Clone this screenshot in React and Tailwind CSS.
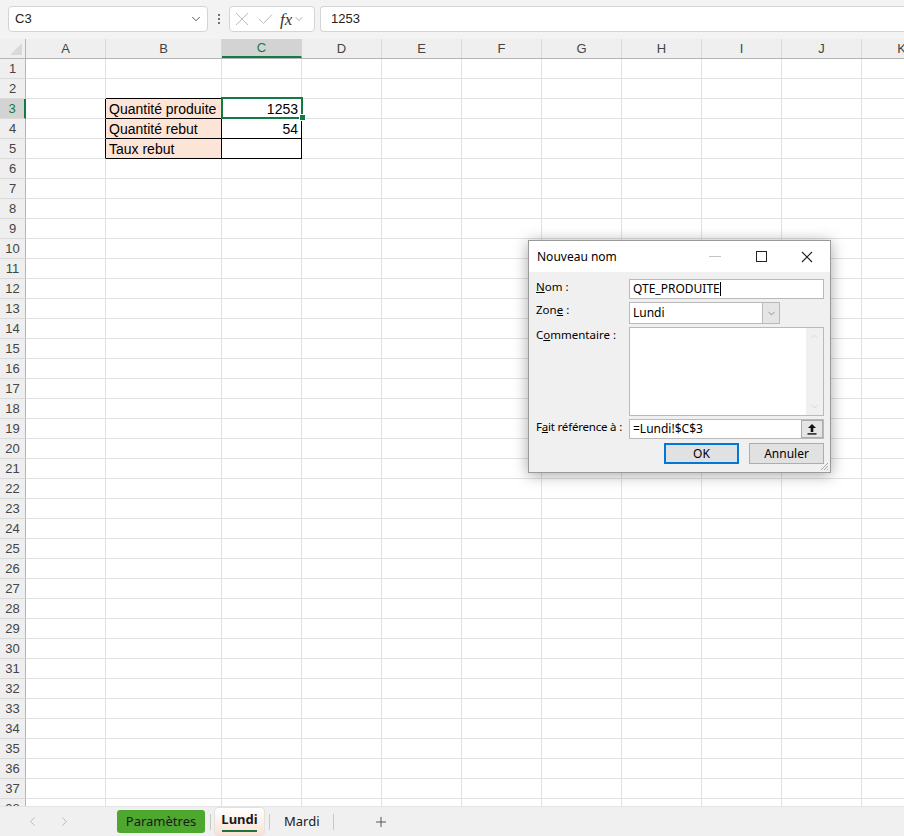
import { ChevronDown, ChevronLeft, ChevronRight, Plus, ChevronUp } from "lucide-react";

const COLS = [
  { id: "A", w: "w-[80px]" },
  { id: "B", w: "w-[116px]" },
  { id: "C", w: "w-[80px]" },
  { id: "D", w: "w-[80px]" },
  { id: "E", w: "w-[80px]" },
  { id: "F", w: "w-[80px]" },
  { id: "G", w: "w-[80px]" },
  { id: "H", w: "w-[80px]" },
  { id: "I", w: "w-[80px]" },
  { id: "J", w: "w-[80px]" },
  { id: "K", w: "w-[80px]" },
];

const ROWS = Array.from({ length: 38 }, (_, i) => i + 1);

const cells = {
  B3: "Quantité produite",
  B4: "Quantité rebut",
  B5: "Taux rebut",
  C3: "1253",
  C4: "54",
};

function Cell({ r, c, w }) {
  const inTable = r >= 3 && r <= 5 && (c === "B" || c === "C");
  const blackRight = r >= 3 && r <= 5 && (c === "A" || c === "B" || c === "C");
  const blackBottom = r >= 2 && r <= 5 && (c === "B" || c === "C");
  const value = cells[c + r];
  return (
    <div
      className={`${w} h-full shrink-0 border-r border-b flex items-center pt-[2px] overflow-hidden whitespace-nowrap text-[14px] text-black ${
        blackRight ? "border-r-black" : "border-r-[#e1e1e1]"
      } ${blackBottom ? "border-b-black" : "border-b-[#e1e1e1]"} ${
        inTable && c === "B" ? "bg-[#fce4d6]" : "bg-white"
      } ${c === "C" ? "justify-end pr-[3px]" : "pl-[3px]"}`}
    >
      {value}
    </div>
  );
}

function Toolbar() {
  return (
    <div className="h-[39px] shrink-0 bg-[#f3f3f3] flex items-start pt-[6px]">
      <div className="ml-[8px] w-[200px] h-[26px] bg-white border border-[#d4d4d4] rounded-[4px] flex items-center justify-between pl-[6px] pr-[4px]">
        <span className="text-[13px] text-[#222]">C3</span>
        <ChevronDown size={14} strokeWidth={1.5} className="text-[#444]" />
      </div>
      <div className="w-[21px] h-[26px] flex flex-col items-center justify-center gap-[2px]">
        <span className="w-[2px] h-[2px] bg-[#444] rounded-full" />
        <span className="w-[2px] h-[2px] bg-[#444] rounded-full" />
        <span className="w-[2px] h-[2px] bg-[#444] rounded-full" />
      </div>
      <div className="w-[86px] h-[26px] bg-white border border-[#d4d4d4] rounded-[4px] flex items-center pl-[5px]">
        <svg width="14" height="14" viewBox="0 0 14 14">
          <path d="M1 1 L13 13 M13 1 L1 13" stroke="#bcbcbc" strokeWidth="1" fill="none" />
        </svg>
        <svg width="15" height="12" viewBox="0 0 15 12" className="ml-[9px]">
          <path d="M1 6 L5.5 10.5 L14 1.5" stroke="#bcbcbc" strokeWidth="1" fill="none" />
        </svg>
        <span className="ml-[7px] text-[17px] italic text-[#333] leading-none" style={{ fontFamily: '"Liberation Serif", serif' }}>
          fx
        </span>
        <ChevronDown size={12} strokeWidth={1.2} className="text-[#777] ml-[1px]" />
      </div>
      <div className="ml-[5px] flex-1 h-[26px] bg-white border border-r-0 border-[#d4d4d4] rounded-l-[4px] flex items-center pl-[10px]">
        <span className="text-[13px] text-[#222]">1253</span>
      </div>
    </div>
  );
}

function ColumnHeader() {
  return (
    <div className="flex h-[20px] shrink-0 bg-[#efefef] border-b border-b-[#b5b5b5]">
      <div className="w-[26px] shrink-0 h-full border-r border-r-[#b5b5b5] relative">
        <svg width="25" height="19" className="absolute left-0 top-0">
          <polygon points="10,16 22,4 22,16" fill="#d9d9d9" />
        </svg>
      </div>
      {COLS.map((col) => (
        <div
          key={col.id}
          className={`${col.w} shrink-0 h-full flex items-center justify-center text-[13px] border-r ${
            col.id === "C"
              ? "bg-[#d3d3d3] text-[#107c41] border-r-[#d3d3d3] border-b-2 border-b-[#107c41]"
              : "text-[#444] border-r-[#dadada]"
          }`}
        >
          {col.id}
        </div>
      ))}
    </div>
  );
}

function Dialog() {
  return (
    <div className="absolute left-[528px] top-[240px] w-[303px] h-[233px] border border-[#9a9a9a] bg-[#f0f0f0] shadow-[0_2px_14px_rgba(0,0,0,0.35)] flex flex-col text-[12px] text-black" style={{ fontFamily: '"Noto Sans", sans-serif' }}>
      <div className="h-[31px] bg-white flex items-center shrink-0">
        <span className="ml-[8px] flex-1">Nouveau nom</span>
        <div className="w-[46px] flex justify-center">
          <span className="w-[12px] h-px bg-[#c4c4c4]" />
        </div>
        <div className="w-[46px] flex justify-center">
          <span className="w-[11px] h-[11px] border border-[#222]" />
        </div>
        <div className="w-[46px] flex justify-center">
          <svg width="12" height="12" viewBox="0 0 12 12">
            <path d="M1 1 L11 11 M11 1 L1 11" stroke="#222" strokeWidth="1.1" />
          </svg>
        </div>
      </div>
      <div className="flex-1 relative pt-[7px] pl-[7px] pr-[6px] grid grid-cols-[93px_1fr] gap-y-[3px] content-start">
        <span className="leading-[14px] pt-[1px] whitespace-nowrap text-[11.5px]">
          <span className="underline">N</span>om :
        </span>
        <div className="h-[20px] bg-white border border-[#b9b9b9] flex items-center pl-[3px]">
          QTE_PRODUITE<span className="w-px h-[14px] bg-black" />
        </div>

        <span className="leading-[14px] pt-[1px] whitespace-nowrap text-[11.5px]">
          Zon<span className="underline">e</span> :
        </span>
        <div className="w-[151px] h-[22px] bg-white border border-[#b9b9b9] flex items-center">
          <span className="flex-1 pl-[3px]">Lundi</span>
          <div className="w-[17px] h-full bg-[#e5e5e5] border-l border-[#b9b9b9] flex items-center justify-center">
            <ChevronDown size={11} strokeWidth={1.2} className="text-[#555]" />
          </div>
        </div>

        <span className="leading-[14px] pt-[1px] whitespace-nowrap text-[11.5px]">
          C<span className="underline">o</span>mmentaire :
        </span>
        <div className="h-[89px] bg-white border border-[#b9b9b9] flex justify-end">
          <div className="w-[17px] h-full bg-[#f0f0f0] flex flex-col justify-between items-center py-[3px]">
            <ChevronUp size={11} strokeWidth={1.2} className="text-[#c2c2c2]" />
            <ChevronDown size={11} strokeWidth={1.2} className="text-[#c2c2c2]" />
          </div>
        </div>

        <span className="leading-[14px] pt-[1px] whitespace-nowrap text-[11.5px] tracking-[-0.2px]">
          F<span className="underline">a</span>it référence à :
        </span>
        <div className="h-[20px] bg-white border border-[#b9b9b9] flex items-center pl-[3px]">
          <span className="flex-1">=Lundi!$C$3</span>
          <div className="w-[22px] h-[18px] bg-[#e5e5e5] border border-[#adadad] flex items-center justify-center">
            <svg width="10" height="12" viewBox="0 0 10 12">
              <path d="M5 1 L9 5 L6.3 5 L6.3 9 L3.7 9 L3.7 5 L1 5 Z" fill="#111" />
              <rect x="0.5" y="10.2" width="9" height="1.4" fill="#111" />
            </svg>
          </div>
        </div>

        <span />
        <div className="flex justify-end gap-[10px] pt-[1px]">
          <div className="w-[75px] h-[21px] bg-[#e1e1e1] border-2 border-[#0078d7] flex items-center justify-center">OK</div>
          <div className="w-[75px] h-[21px] bg-[#e1e1e1] border border-[#adadad] flex items-center justify-center">Annuler</div>
        </div>

        <svg width="10" height="10" viewBox="0 0 10 10" className="absolute right-[1px] bottom-[1px]">
          <path d="M9 2 L2 9 M9 5 L5 9 M9 8 L8 9" stroke="#a8a8a8" strokeWidth="1" />
        </svg>
      </div>
    </div>
  );
}

function TabBar() {
  return (
    <div className="h-[30px] shrink-0 bg-[#f0f0f0] border-t border-t-[#e4e4e4] flex items-center text-[13px]" style={{ fontFamily: '"Noto Sans", sans-serif' }}>
      <ChevronLeft size={15} strokeWidth={1} className="ml-[25px] text-[#9a9a9a]" />
      <ChevronRight size={15} strokeWidth={1} className="ml-[17px] text-[#9a9a9a]" />
      <div className="ml-[45px] w-[88px] h-[23px] rounded-[3px] bg-[#4ea72e] flex items-center justify-center text-[#1a1a1a]">
        Paramètres
      </div>
      <span className="ml-[5px] w-px h-[16px] bg-[#c8c8c8]" />
      <div className="ml-[3px] w-[51px] h-[29px] self-start rounded-[4px] border border-[#e2e2e2] bg-gradient-to-b from-white to-[#fbe2d3] flex flex-col items-center justify-center">
        <span className="font-bold text-[#1a1a1a] leading-[16px]">Lundi</span>
        <span className="w-[35px] h-[2px] bg-[#217346] mt-[3px]" />
      </div>
      <span className="ml-[4px] w-px h-[16px] bg-[#c8c8c8]" />
      <span className="ml-[14px] text-[#1a1a1a]">Mardi</span>
      <span className="ml-[13px] w-px h-[16px] bg-[#c8c8c8]" />
      <Plus size={16} strokeWidth={1.2} className="ml-[39px] text-[#333]" />
    </div>
  );
}

export default function App() {
  return (
    <div className="w-[904px] h-[836px] overflow-hidden bg-white flex flex-col relative" style={{ fontFamily: '"Liberation Sans", Arial, sans-serif' }}>
      <Toolbar />
      <ColumnHeader />
      <div className="relative flex-1 overflow-hidden">
        {ROWS.map((r) => (
          <div key={r} className="flex h-[20px]">
            <div
              className={`w-[26px] shrink-0 h-full border-b border-b-[#dadada] border-r flex items-center justify-center text-[13px] ${
                r === 3 ? "bg-[#d3d3d3] text-[#107c41] border-r-2 border-r-[#107c41]" : "bg-[#efefef] text-[#444] border-r-[#b5b5b5]"
              }`}
            >
              {r}
            </div>
            {COLS.map((col) => (
              <Cell key={col.id} r={r} c={col.id} w={col.w} />
            ))}
          </div>
        ))}
        <div className="absolute left-[221px] top-[38px] w-[82px] h-[22px] border-2 border-[#107c41]" />
        <div className="absolute left-[299px] top-[55px] w-[7px] h-[7px] bg-[#107c41] border border-white" />
      </div>
      <TabBar />
      <Dialog />
    </div>
  );
}
